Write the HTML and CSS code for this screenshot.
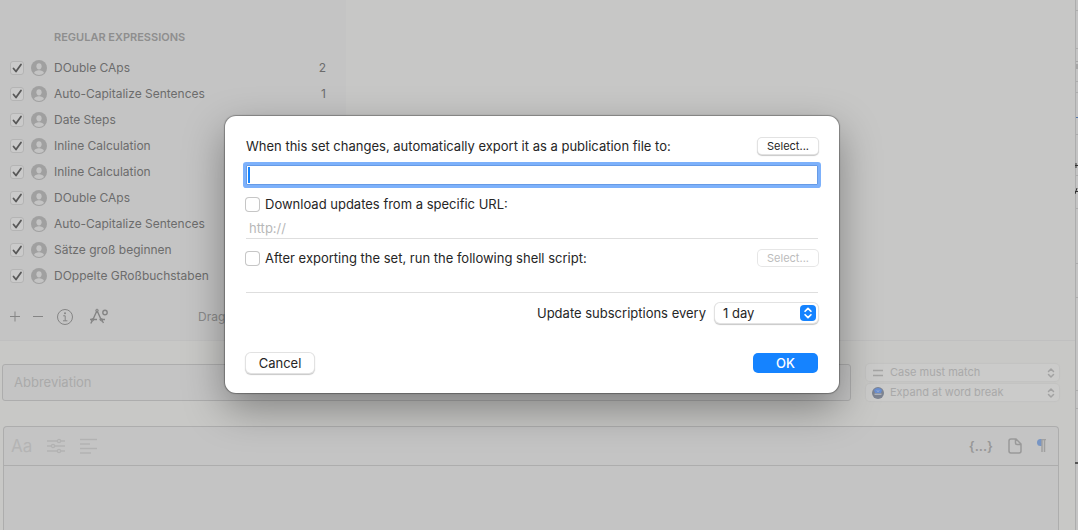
FILE: index.html
```html
<!DOCTYPE html>
<html lang="en">
<head>
    <meta charset="UTF-8">
    <meta name="viewport" content="width=device-width, initial-scale=1.0">
    <title>Snippet Sets</title>
    <link rel="stylesheet" href="styles.css">
</head>
<body>
    <svg class="sprite" aria-hidden="true">
        <symbol id="person" viewBox="0 0 16 16">
            <circle cx="8" cy="8" r="8" fill="#a0a0a0"/>
            <ellipse cx="8" cy="6.3" rx="2.6" ry="3.1" fill="#c4c4c4"/>
            <path d="M3 12.9c.6-1.900 2.600-2.700 5-2.700s4.400.8 5 2.700a7 7 0 0 1-10 0z" fill="#c4c4c4"/>
        </symbol>
        <symbol id="updown" viewBox="0 0 8 12">
            <path d="M1.500 4.500 4 2l2.500 2.500M1.500 7.500 4 10l2.500-2.500" fill="none" stroke="currentColor" stroke-width="1.500" stroke-linecap="round" stroke-linejoin="round"/>
        </symbol>
    </svg>

    <div class="app">
        <main class="window">
            <div class="top">
                <aside class="sidebar">
                    <h2>REGULAR EXPRESSIONS</h2>
                    <ul class="sets">
                        <li><label><input type="checkbox" checked><svg class="avatar"><use href="#person"/></svg>DOuble CAps</label><span class="count">2</span></li>
                        <li><label><input type="checkbox" checked><svg class="avatar"><use href="#person"/></svg>Auto-Capitalize Sentences</label><span class="count">1</span></li>
                        <li><label><input type="checkbox" checked><svg class="avatar"><use href="#person"/></svg>Date Steps</label></li>
                        <li><label><input type="checkbox" checked><svg class="avatar"><use href="#person"/></svg>Inline Calculation</label></li>
                        <li><label><input type="checkbox" checked><svg class="avatar"><use href="#person"/></svg>Inline Calculation</label></li>
                        <li><label><input type="checkbox" checked><svg class="avatar"><use href="#person"/></svg>DOuble CAps</label></li>
                        <li><label><input type="checkbox" checked><svg class="avatar"><use href="#person"/></svg>Auto-Capitalize Sentences</label></li>
                        <li><label><input type="checkbox" checked><svg class="avatar"><use href="#person"/></svg>Sätze groß beginnen</label></li>
                        <li><label><input type="checkbox" checked><svg class="avatar"><use href="#person"/></svg>DOppelte GRoßbuchstaben</label></li>
                    </ul>
                    <div class="actions">
                        <button type="button" aria-label="Add">
                            <svg width="10" height="18" viewBox="0 0 10 18"><path d="M0 8.500h10M5 3.500v10"/></svg>
                        </button>
                        <button type="button" aria-label="Remove">
                            <svg width="10" height="18" viewBox="0 0 10 18"><path d="M0 8.500h10"/></svg>
                        </button>
                        <button type="button" aria-label="Info">
                            <svg width="18" height="18" viewBox="0 0 18 18"><circle cx="9" cy="9" r="7.500"/><path d="M7.200 7.800h2v5M7 12.800h4.400"/><circle class="dot" cx="9" cy="5.200" r="1"/></svg>
                        </button>
                        <button type="button" aria-label="Automation">
                            <svg width="22" height="18" viewBox="-2 0 22 18"><path stroke-width="1.400" d="M8 2.500 4 11.500M8 2.500l4.500 10M1 11.500h7M10.500 11.500H16M3.300 12.500l-1.500 3M13 12.500l1.500 2.500"/><circle cx="8" cy="2.500" r="1.300"/><circle cx="3.500" cy="11.800" r="1.200"/><circle cx="12.500" cy="11.800" r="1.200"/><circle cx="16" cy="4.500" r="2.200" stroke-width="1.400"/></svg>
                        </button>
                        <span class="drag">Drag</span>
                    </div>
                </aside>
                <div class="detail"></div>
            </div>

            <div class="abbreviation-row">
                <input class="abbreviation" type="text" placeholder="Abbreviation" aria-label="Abbreviation">
                <div class="options">
                    <div class="popup muted">
                        <svg class="lead" width="12" height="12" viewBox="0 0 12 12"><path d="M1 3.500h10M1 8.500h10" stroke="#a5a5a4" stroke-width="1.500"/></svg>
                        <select aria-label="Case"><option>Case must match</option></select>
                        <svg class="arrows" width="8" height="12"><use href="#updown"/></svg>
                    </div>
                    <div class="popup muted">
                        <svg class="lead" width="12" height="12" viewBox="0 0 12 12"><circle cx="6" cy="6" r="6" fill="#7c8391"/><path d="M2 3a5 5 0 0 1 8 0L9 6H3z" fill="#6a8fd0"/><path d="M2.500 7.200h7" stroke="#c4c8cf"/><path d="M5 3.500l1 1 1-1" stroke="#b6c2d8" fill="none"/></svg>
                        <select aria-label="Expansion"><option>Expand at word break</option></select>
                        <svg class="arrows" width="8" height="12"><use href="#updown"/></svg>
                    </div>
                </div>
            </div>

            <section class="editor">
                <div class="toolbar">
                    <button type="button" class="font">Aa</button>
                    <button type="button" aria-label="Adjust">
                        <svg width="18" height="16" viewBox="0 0 18 16"><path d="M0 3h10M14 3h4M0 8h4M8 8h10M0 13h10M14 13h4"/><circle cx="12" cy="3" r="1.600"/><circle cx="6" cy="8" r="1.600"/><circle cx="12" cy="13" r="1.600"/></svg>
                    </button>
                    <button type="button" aria-label="Align">
                        <svg width="17" height="16" viewBox="0 0 17 16"><path d="M0 1.500h17M0 6h10M0 10.500h17M0 15h11"/></svg>
                    </button>
                    <span class="spacer"></span>
                    <button type="button" class="macro">{...}</button>
                    <button type="button" class="dark" aria-label="New document">
                        <svg width="14" height="16" viewBox="0 0 14 16"><path d="M3 1h5l5 5v7a2 2 0 0 1-2 2H3a2 2 0 0 1-2-2V3a2 2 0 0 1 2-2zM7.500 1v4a1.500 1.500 0 0 0 1.500 1.500h4"/></svg>
                    </button>
                    <button type="button" class="dark" aria-label="Formatting marks">
                        <svg width="9" height="14" viewBox="0 0 9 14"><path d="M5 0H3.500a3.500 3.500 0 0 0 0 7H5z" fill="#7795c4" stroke="none"/><path d="M5 .5h4M5 0v13M7.500 0v13" stroke="#a0a0a0"/></svg>
                    </button>
                </div>
                <textarea class="content" aria-label="Content"></textarea>
            </section>
        </main>

        <svg class="edge" width="3" viewBox="0 0 3 530" preserveAspectRatio="none" aria-hidden="true">
            <path d="M1 10.500h2M1 48.500h2M1 81.500h2M1 92.500h2M1 134.500h2M1 175.500h2M1 208.500h2M1 263.500h2M1 297.500h2M1 390.500h2M1 408.500h2" stroke="#adadad"/>
            <path d="M.5 0v530" stroke="#adadad"/>
            <path d="M2 61v1M2 64v5" stroke="#8a8a8a"/>
            <path d="M1 117.500h2" stroke="#5576a8"/>
            <path d="M0 165.500h3M1 163v5M0 194l2-6M0 191.500h3" stroke="#333"/>
            <path d="M0 463h3" stroke="#555" stroke-width="2"/>
        </svg>
    </div>

    <form class="dialog" role="dialog" aria-label="Export options">
        <div class="row">
            <label for="export-path">When this set changes, automatically export it as a publication file to:</label>
            <button type="button" class="btn small">Select...</button>
        </div>
        <input class="path" type="text" id="export-path">

        <div class="row">
            <label class="check"><input type="checkbox">Download updates from a specific URL:</label>
        </div>
        <input class="line" type="text" placeholder="http://" aria-label="URL">

        <div class="row">
            <label class="check"><input type="checkbox">After exporting the set, run the following shell script:</label>
            <button type="button" class="btn small" disabled>Select...</button>
        </div>
        <input class="line" type="text" aria-label="Shell script">

        <div class="update">
            <label for="interval">Update subscriptions every</label>
            <div class="popup">
                <select id="interval"><option>1 day</option></select>
                <span class="stepper"><svg width="10" height="14"><use href="#updown"/></svg></span>
            </div>
        </div>

        <div class="buttons">
            <button type="button" class="btn">Cancel</button>
            <button type="submit" class="btn primary">OK</button>
        </div>
    </form>
</body>
</html>
```

FILE: styles.css
```css
* {
    box-sizing: border-box;
}

body {
    margin: 0;
    font-family: Inter, "Liberation Sans", sans-serif;
    font-size: 13px;
    line-height: 20px;
    color: #262626;
    background: #c8c8c6;
    overflow: hidden;
}

button,
input,
select,
textarea {
    font: inherit;
    color: inherit;
    margin: 0;
}

button {
    padding: 0;
    border: none;
    background: none;
}

svg {
    display: block;
    flex: none;
}

.sprite {
    position: absolute;
    width: 0;
    height: 0;
}

.app {
    display: flex;
    height: 100vh;
}

.window {
    flex: 1;
    min-width: 0;
    display: flex;
    flex-direction: column;
}

.edge {
    height: 100%;
    background: #c4c4c4;
}

/* Sidebar */
.top {
    display: flex;
    border-bottom: 1px solid #c0c0c0;
}

.sidebar {
    width: 346px;
    padding-top: 27px;
    background: #c4c4c4;
    color: #6c6c6c;
}

.detail {
    flex: 1;
    background: #c7c7c6;
}

.sidebar h2 {
    margin: 0 0 8px 54px;
    font-size: 11px;
    line-height: 20px;
    font-weight: 600;
    color: #8e8e8e;
}

.sets {
    list-style: none;
    margin: 0;
    padding: 0 20px 0 10px;
    font-size: 12px;
}

.sets li {
    display: flex;
    justify-content: space-between;
    align-items: center;
    height: 26px;
}

.sets label {
    display: flex;
    align-items: center;
}

.sets input {
    appearance: none;
    width: 14px;
    height: 14px;
    border: 1px solid #b4b4b4;
    border-radius: 3px;
    background: #cacaca url("data:image/svg+xml,%3Csvg xmlns='http://www.w3.org/2000/svg' viewBox='0 0 12 12'%3E%3Cpath d='M2.500 6.500 5 9.500 10 2.500' fill='none' stroke='%23585858' stroke-width='1.800' stroke-linecap='round' stroke-linejoin='round'/%3E%3C/svg%3E") center / 12px no-repeat;
}

.avatar {
    width: 16px;
    height: 16px;
    margin: 0 7px;
}

.actions {
    display: flex;
    align-items: center;
    gap: 13px;
    height: 51px;
    padding: 5px 10px 0;
}

.actions svg {
    fill: none;
    stroke: #858585;
}

.actions .dot {
    fill: #858585;
    stroke: none;
}

.drag {
    margin-left: 76px;
    font-size: 12px;
    color: #8a8a8a;
}

/* Abbreviation */
.abbreviation-row {
    display: flex;
    gap: 15px;
    padding: 23px 16px 0 2px;
}

.abbreviation {
    flex: 1;
    height: 37px;
    padding: 0 11px 2px;
    border: 1px solid #adadad;
    border-radius: 3px;
    background: #c4c4c4;
}

.abbreviation::placeholder {
    color: #aaa;
}

.options {
    display: flex;
    flex-direction: column;
    justify-content: space-between;
    width: 193px;
}

.popup {
    position: relative;
}

.popup select {
    appearance: none;
    display: block;
    width: 100%;
    border: none;
}

.popup.muted select {
    height: 17px;
    padding: 0 20px 0 24px;
    border-radius: 4px;
    background: #cbcbca;
    box-shadow: 0 0 1px 1px #c2c2c1;
    font-size: 11px;
    line-height: 17px;
    color: #a9a9a9;
}

.lead,
.arrows,
.stepper {
    position: absolute;
    pointer-events: none;
}

.lead {
    left: 6px;
    top: 3px;
}

.arrows {
    right: 4px;
    top: 3px;
    color: #a2a2a2;
}

/* Editor */
.editor {
    flex: 1;
    display: flex;
    flex-direction: column;
    margin: 25px 16px 0 3px;
    border: 1px solid #adadad;
    border-bottom: none;
    border-radius: 4px 4px 0 0;
    background: #c4c4c4;
}

.toolbar {
    display: flex;
    align-items: center;
    gap: 15px;
    height: 39px;
    padding: 0 12px 0 7px;
    border-bottom: 1px solid #adadad;
}

.toolbar svg {
    fill: none;
    stroke: #b2b2b2;
    stroke-width: 1.3px;
}

.toolbar .dark svg {
    stroke: #999;
    stroke-width: 1.5px;
}

.spacer {
    flex: 1;
}

.font {
    font-size: 17px;
    color: #b4b4b4;
}

.macro {
    font-weight: 600;
    font-size: 13px;
    color: #979797;
}

.content {
    flex: 1;
    border: none;
    background: none;
    resize: none;
}

/* Dialog */
.dialog {
    position: absolute;
    left: 225px;
    top: 116px;
    width: 614px;
    padding: 20px 21px;
    border-radius: 11px;
    background: #fff;
    box-shadow: 0 0 1px 1px rgba(0, 0, 0, 0.3), 0 15px 40px rgba(0, 0, 0, 0.36);
}

.row {
    display: flex;
    justify-content: space-between;
    align-items: center;
    height: 20px;
}

.btn {
    height: 20px;
    border-radius: 5px;
    background: #fff;
    box-shadow: 0 0 0 1px #e2e2e2, 0 1px 1px 1px #c8c8c8;
    min-width: 68px;
}

.btn.small {
    height: 16px;
    min-width: 60px;
    border-radius: 4px;
    font-size: 11px;
    line-height: 16px;
}

.btn:disabled {
    color: #bcbcbc;
    box-shadow: 0 0 0 1px #e6e6e6;
}

.btn.primary {
    background: #1583ff;
    box-shadow: none;
    color: #fff;
    font-weight: 500;
    min-width: 65px;
}

.path {
    display: block;
    width: 100%;
    height: 20px;
    margin: 9px 0;
    padding: 0 4px;
    border: 1px solid #679be6;
    outline: none;
    border-radius: 1px;
    background: linear-gradient(#1583ff, #1583ff) 1px center / 2px 16px no-repeat #fff;
    box-shadow: 0 0 0 3px #7db1fb;
    caret-color: transparent;
}

.check {
    display: flex;
    align-items: center;
    gap: 6px;
}

.check input {
    appearance: none;
    width: 13px;
    height: 13px;
    border-radius: 3px;
    box-shadow: 0 0 0 1px #c6c6c6;
}

.line {
    display: block;
    width: 100%;
    height: 21px;
    margin: 4px 0 9px;
    padding: 0 3px;
    border: none;
    border-bottom: 1px solid #dedede;
    outline: none;
}

.line::placeholder {
    color: #b8b8b8;
}

.update {
    display: flex;
    justify-content: flex-end;
    align-items: center;
    gap: 9px;
    padding-top: 1px;
    margin-bottom: 30px;
}

.update select {
    width: 103px;
    height: 20px;
    padding: 0 8px;
    border-radius: 5px;
    background: #fff;
    box-shadow: 0 0 0 1px #e2e2e2, 0 1px 1px 1px #c8c8c8;
}

.stepper {
    right: 2px;
    top: 2px;
    display: flex;
    align-items: center;
    justify-content: center;
    width: 16px;
    height: 16px;
    border-radius: 4px;
    background: #1583ff;
    color: #fff;
}

.buttons {
    display: flex;
    justify-content: space-between;
}
```
